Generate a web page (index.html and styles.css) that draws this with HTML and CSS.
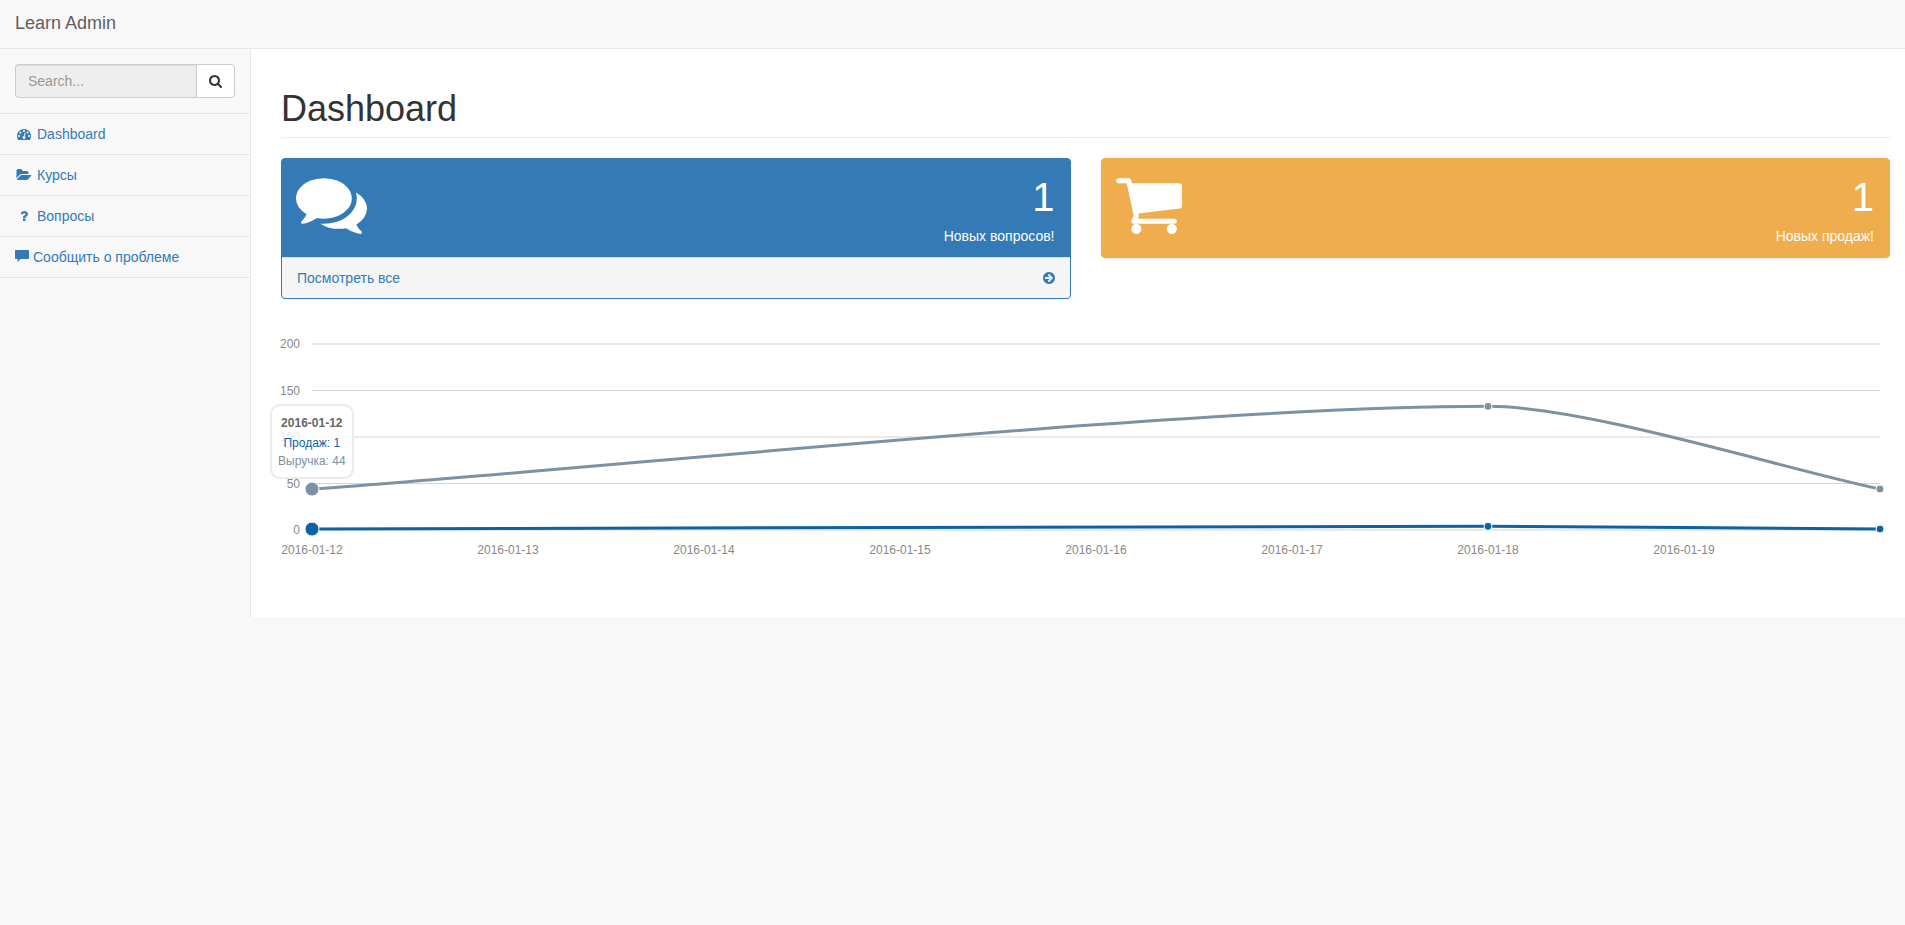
FILE: index.html
```
<!DOCTYPE html>
<html lang="ru">
<head>
    <meta charset="UTF-8">
    <meta name="viewport" content="width=device-width, initial-scale=1.0">
    <title>Learn Admin</title>
    <link rel="stylesheet" href="styles.css">
</head>
<body>
    <header class="navbar">
        <a class="brand" href="#">Learn Admin</a>
    </header>

    <div class="wrapper">
        <nav class="sidebar">
            <form class="search">
                <input type="text" class="search-input" placeholder="Search..." aria-label="Search" disabled>
                <button type="button" class="search-btn" aria-label="Search">
                    <svg class="icon" width="13" height="14" viewBox="64 0 1664 1792"><path d="M1216 832q0-185-131.5-316.5t-316.5-131.5-316.5 131.5-131.5 316.5 131.5 316.5 316.5 131.5 316.5-131.5 131.5-316.5zm512 832q0 52-38 90t-90 38q-54 0-90-38l-343-342q-179 124-399 124-143 0-273.5-55.5t-225-150-150-225-55.5-273.5 55.5-273.5 150-225 225-150 273.5-55.5 273.5 55.5 225 150 150 225 55.5 273.5q0 220-124 399l343 343q37 37 37 90z"/></svg>
                </button>
            </form>
            <ul class="menu">
                <li>
                    <a href="#">
                        <span class="menu-icon"><svg class="icon" width="14" height="14" viewBox="0 0 1792 1792"><path d="M384 1152q0-53-37.5-90.5t-90.5-37.5-90.5 37.5-37.5 90.5 37.5 90.5 90.5 37.5 90.5-37.5 37.5-90.5zm192-448q0-53-37.5-90.5t-90.5-37.5-90.5 37.5-37.5 90.5 37.5 90.5 90.5 37.5 90.5-37.5 37.5-90.5zm428 481l101-382q6-26-7.5-48.5t-38.5-29.5-48 6.5-30 39.5l-101 382q-60 5-107 43.5t-63 98.5q-20 77 20 146t117 89 146-20 89-117q16-60-6-117t-72-91zm660-33q0-53-37.5-90.5t-90.5-37.5-90.5 37.5-37.5 90.5 37.5 90.5 90.5 37.5 90.5-37.5 37.5-90.5zm-640-640q0-53-37.5-90.5t-90.5-37.5-90.5 37.5-37.5 90.5 37.5 90.5 90.5 37.5 90.5-37.5 37.5-90.5zm448 192q0-53-37.5-90.5t-90.5-37.5-90.5 37.5-37.5 90.5 37.5 90.5 90.5 37.5 90.5-37.5 37.5-90.5zm320 448q0 261-141 483-19 29-54 29h-1402q-35 0-54-29-141-221-141-483 0-182 71-348t191-286 286-191 348-71 348 71 286 191 191 286 71 348z"/></svg></span>
                        Dashboard
                    </a>
                </li>
                <li>
                    <a href="#">
                        <span class="menu-icon"><svg class="icon" width="14" height="14" viewBox="0 0 1792 1792"><path d="M1815 952q0 31-31 66l-336 396q-43 51-120.5 86.5t-143.5 35.5h-1088q-34 0-60.5-13t-26.5-43q0-31 31-66l336-396q43-51 120.5-86.5t143.5-35.5h1088q34 0 60.5 13t26.5 43zm-343-344v160h-832q-94 0-197 47.5t-164 119.5l-337 396-5 6q0-4-.5-12.5t-.5-12.5v-960q0-92 66-158t158-66h320q92 0 158 66t66 158v32h544q92 0 158 66t66 158z"/></svg></span>
                        Курсы
                    </a>
                </li>
                <li>
                    <a href="#">
                        <span class="menu-icon"><svg class="icon" width="14" height="14" viewBox="0 0 1792 1792"><path d="M1088 1256v240q0 16-12 28t-28 12h-240q-16 0-28-12t-12-28v-240q0-16 12-28t28-12h240q16 0 28 12t12 28zm316-600q0 54-15.5 101t-35 76.5-55 59.5-57.5 43.5-61 35.5q-41 23-68.5 65t-27.5 67q0 17-12 32.5t-28 15.5h-240q-15 0-25.5-18.5t-10.5-37.5v-45q0-83 65-156.5t143-108.5q59-27 84-56t25-76q0-42-46.5-74t-107.5-32q-65 0-108 29-35 25-107 115-13 16-31 16-12 0-25-8l-164-125q-13-10-15.5-25t5.5-28q160-266 464-266 80 0 161 31t146 83 106 127.5 41 158.5z"/></svg></span>
                        Вопросы
                    </a>
                </li>
                <li>
                    <a href="#">
                        <svg class="icon" width="14" height="14" viewBox="0 0 14 14"><path d="M.5 0H13.500L14 .5V8.500L13.500 9H5.500L2.500 12V9H.5L0 8.500V.5z"/></svg>
                        Сообщить о проблеме
                    </a>
                </li>
            </ul>
        </nav>

        <main class="page">
            <h1 class="page-header">Dashboard</h1>

            <div class="panels">
                <section class="panel panel-blue">
                    <div class="panel-heading">
                        <svg class="icon" width="71" height="71" viewBox="0 0 1792 1792"><path d="M1408 768q0 139-94 257t-256.5 186.5-353.5 68.5q-86 0-176-16-124 88-278 128-36 9-86 16h-3q-11 0-20.5-8t-11.5-21q-1-3-1-6.5t.5-6.5 2-6l2.5-5 3.5-5.5 4-5 4.5-5 4-4.5q5-6 23-25t26-29.5 22.5-29 25-38.5 20.5-44q-124-72-195-177t-71-224q0-139 94-257t256.5-186.5 353.5-68.5 353.5 68.5 256.5 186.5 94 257zm384 256q0 120-71 224.5t-195 176.5q10 24 20.5 44t25 38.5 22.5 29 26 29.5 23 25q1 1 4 4.5t4.5 5 4 5 3.5 5.5l2.5 5 2 6 .5 6.5-1 6.5q-3 14-13 22t-22 7q-50-7-86-16-154-40-278-128-90 16-176 16-271 0-472-132 58 4 88 4 161 0 309-45t264-129q125-92 192-212t67-254q0-77-23-152 129 71 204 178t75 230z"/></svg>
                        <div class="panel-info">
                            <div class="huge">1</div>
                            <div>Новых вопросов!</div>
                        </div>
                    </div>
                    <a class="panel-footer" href="#">
                        <span>Посмотреть все</span>
                        <svg class="icon" width="12" height="14" viewBox="128 0 1536 1792"><path d="M1413 896q0-27-18-45l-362-362-91-91q-18-18-45-18t-45 18l-91 91q-18 18-18 45t18 45l189 189h-502q-26 0-45 19t-19 45v128q0 26 19 45t45 19h502l-189 189q-19 19-19 45t19 45l91 91q18 18 45 18t45-18l91-91 362-362q18-18 18-45zm251 0q0 209-103 385.5t-279.5 279.5-385.5 103-385.5-103-279.5-279.5-103-385.5 103-385.5 279.5-279.5 385.5-103 385.5 103 279.5 279.5 103 385.5z"/></svg>
                    </a>
                </section>

                <section class="panel panel-yellow">
                    <div class="panel-heading">
                        <svg class="icon" width="66" height="71" viewBox="64 0 1664 1792"><path d="M704 1536q0 52-38 90t-90 38-90-38-38-90 38-90 90-38 90 38 38 90zm896 0q0 52-38 90t-90 38-90-38-38-90 38-90 90-38 90 38 38 90zm128-1088v512q0 24-16.500 42.500t-40.500 21.500l-1044 122q13 60 13 70 0 16-24 64h920q26 0 45 19t19 45-19 45-45 19h-1024q-26 0-45-19t-19-45q0-11 8-31.500t16-36 21.500-40 15.500-29.500l-177-823h-204q-26 0-45-19t-19-45 19-45 45-19h256q16 0 28.500 6.500t19.500 15.500 13 24.500 8 26 5.500 29.500 4.500 26h1201q26 0 45 19t19 45z"/></svg>
                        <div class="panel-info">
                            <div class="huge">1</div>
                            <div>Новых продаж!</div>
                        </div>
                    </div>
                </section>
            </div>

            <div class="chart" id="chart">
                <svg class="chart-svg" id="chartSvg"></svg>
                <div class="chart-hover" id="chartHover"></div>
            </div>
        </main>
    </div>

    <script src="chart.js"></script>
</body>
</html>
```
FILE: styles.css
```
* {
    box-sizing: border-box;
}
body {
    margin: 0;
    font-family: Arial, "Liberation Sans", sans-serif;
    font-size: 14px;
    line-height: 20px;
    color: #333;
    background-color: #f8f8f8;
}
a {
    color: #337ab7;
    text-decoration: none;
}
.icon {
    display: block;
    flex: none;
    fill: currentColor;
    overflow: visible;
}

/* navbar */
.navbar {
    display: flex;
    border-bottom: 1px solid #e7e7e7;
}
.brand {
    padding: 13px 15px 15px;
    font-size: 18px;
    color: #5e5e5e;
}

/* sidebar */
.wrapper {
    display: flex;
    align-items: flex-start;
}
.sidebar {
    flex: none;
    width: 250px;
}
.search {
    display: flex;
    padding: 15px;
    border-bottom: 1px solid #e7e7e7;
}
.search-input {
    flex: 1;
    min-width: 0;
    height: 34px;
    padding: 6px 12px;
    font: inherit;
    background-color: #eee;
    border: 1px solid #ccc;
    border-right: none;
    border-radius: 4px 0 0 4px;
    box-shadow: inset 0 1px 1px rgba(0, 0, 0, 0.075);
}
.search-input::placeholder {
    color: #999;
}
.search-btn {
    height: 34px;
    padding: 6px 12px;
    color: #333;
    background-color: #fff;
    border: 1px solid #ccc;
    border-radius: 0 4px 4px 0;
    cursor: pointer;
}
.menu {
    margin: 0;
    padding: 0;
    list-style: none;
}
.menu li {
    border-bottom: 1px solid #e7e7e7;
}
.menu a {
    display: flex;
    align-items: center;
    gap: 4px;
    padding: 10px 15px;
}
.menu a:hover {
    background-color: #eee;
}
.menu-icon {
    display: flex;
    justify-content: center;
    width: 18px;
}

/* content */
.page {
    flex: 1;
    min-width: 0;
    min-height: 568px;
    padding: 0 15px 0 30px;
    background-color: #fff;
    border-left: 1px solid #e7e7e7;
}
.page-header {
    margin: 0 0 20px;
    padding: 40px 0 9px;
    font-size: 36px;
    font-weight: normal;
    line-height: 39px;
    border-bottom: 1px solid #eee;
}
.panels {
    display: grid;
    grid-template-columns: 1fr 1fr;
    align-items: start;
    gap: 30px;
    margin-bottom: 20px;
}
.panel {
    border: 1px solid;
    border-radius: 4px;
    overflow: hidden;
    box-shadow: 0 1px 1px rgba(0, 0, 0, 0.05);
}
.panel-blue {
    border-color: #337ab7;
    background-color: #337ab7;
}
.panel-yellow {
    border-color: #f0ad4e;
    background-color: #f0ad4e;
}
.panel-heading {
    display: flex;
    justify-content: space-between;
    padding: 10px 15px 11px;
    color: #fff;
}
.panel-heading .icon {
    margin: -1px 0 0 -1px;
}
.panel-info {
    text-align: right;
}
.huge {
    font-size: 40px;
    line-height: 57px;
}
.panel-footer {
    display: flex;
    align-items: center;
    justify-content: space-between;
    padding: 10px 15px;
    background-color: #f5f5f5;
    border-top: 1px solid #ddd;
}

/* chart */
.chart {
    position: relative;
    height: 250px;
    margin: 0 -15px;
}
.chart-svg {
    display: block;
    width: 100%;
    height: 100%;
    font-size: 12px;
}
.chart-svg text {
    fill: #888;
}
.chart-hover {
    position: absolute;
    padding: 6px;
    font-size: 12px;
    line-height: 17px;
    text-align: center;
    white-space: nowrap;
    color: #666;
    background: rgba(255, 255, 255, 0.8);
    border: 2px solid rgba(230, 230, 230, 0.8);
    border-radius: 10px;
}
.hover-label {
    margin: 3px 0;
    font-weight: bold;
}
.hover-point {
    margin: 1px 0;
}
```
FILE: chart.js
```
let rows = [
    { date: "2016-01-12", values: [1, 44] },
    { date: "2016-01-18", values: [4, 133] },
    { date: "2016-01-20", values: [1, 44] }
];
let labels = ["Продаж", "Выручка"];
let colors = ["#0b62a4", "#7a92a3"];
let yMax = 200;
let dayMs = 24 * 60 * 60 * 1000;
let active = 0;

let chart = document.getElementById("chart");
let svg = document.getElementById("chartSvg");
let hover = document.getElementById("chartHover");

function add(name, attrs, text) {
    let el = document.createElementNS("http://www.w3.org/2000/svg", name);
    for (let key in attrs) {
        el.setAttribute(key, attrs[key]);
    }
    if (text !== undefined) {
        el.textContent = text;
    }
    svg.appendChild(el);
}

function slope(a, b) {
    return (b.y - a.y) / (b.x - a.x);
}

// smooth line through the points
function linePath(points, bottom) {
    let grads = points.map((p, i) => slope(points[i - 1] || p, points[i + 1] || p));
    let path = `M${points[0].x},${points[0].y}`;
    for (let i = 1; i < points.length; i++) {
        let a = points[i - 1];
        let b = points[i];
        let ix = (b.x - a.x) / 4;
        let y1 = Math.min(bottom, a.y + ix * grads[i - 1]);
        let y2 = Math.min(bottom, b.y - ix * grads[i]);
        path += `C${a.x + ix},${y1},${b.x - ix},${y2},${b.x},${b.y}`;
    }
    return path;
}

function draw() {
    svg.innerHTML = "";
    let left = 46;
    let right = chart.clientWidth - 25;
    let top = 25;
    let bottom = chart.clientHeight - 39;
    let start = Date.parse(rows[0].date);
    let end = Date.parse(rows[rows.length - 1].date);
    let getX = time => left + (time - start) / (end - start) * (right - left);
    let getY = value => bottom - value / yMax * (bottom - top);

    for (let v = 0; v <= yMax; v += 50) {
        add("text", { x: left - 12, y: getY(v) + 4, "text-anchor": "end" }, v);
        add("path", { d: `M${left},${getY(v)}H${right}`, stroke: "#aaa", "stroke-width": 0.5 });
    }
    for (let t = start; t < end; t += dayMs) {
        add("text", { x: getX(t), y: bottom + 24, "text-anchor": "middle" }, new Date(t).toISOString().slice(0, 10));
    }

    for (let s = labels.length - 1; s >= 0; s--) {
        let points = rows.map(row => ({ x: getX(Date.parse(row.date)), y: getY(row.values[s]) }));
        add("path", { d: linePath(points, bottom), fill: "none", stroke: colors[s], "stroke-width": 3 });
        points.forEach((p, i) => {
            add("circle", { cx: p.x, cy: p.y, r: i === active ? 7 : 4, fill: colors[s], stroke: "#fff" });
        });
    }

    let row = rows[active];
    hover.innerHTML = `<div class="hover-label">${row.date}</div>` +
        labels.map((l, s) => `<div class="hover-point" style="color: ${colors[s]}">${l}: ${row.values[s]}</div>`).join("");
    hover.style.left = Math.round(getX(Date.parse(row.date)) - hover.offsetWidth / 2) + "px";
    hover.style.top = Math.round(getY(Math.max(...row.values)) - hover.offsetHeight - 10) + "px";
}

draw();
window.addEventListener("resize", draw);
```
